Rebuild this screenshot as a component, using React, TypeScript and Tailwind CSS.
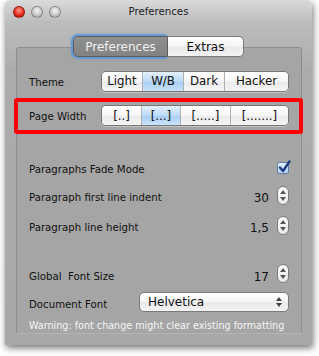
import React from 'react'

type Segment = { label: string; width: string; selected?: boolean }

const themeSegments: Segment[] = [
  { label: 'Light', width: 'w-[40px]' },
  { label: 'W/B', width: 'w-[41px]', selected: true },
  { label: 'Dark', width: 'w-[41px]' },
  { label: 'Hacker', width: 'w-[64px]' },
]

const widthSegments: Segment[] = [
  { label: '[..]', width: 'w-[39px]' },
  { label: '[...]', width: 'w-[39px]', selected: true },
  { label: '[.....]', width: 'w-[50px]' },
  { label: '[.......]', width: 'w-[58px]' },
]

const SegmentedControl = ({ segments }: { segments: Segment[] }) => (
  <div className="flex h-[21px] rounded-[5px] border border-[#767676] overflow-hidden shadow-[0_1px_0_rgba(255,255,255,0.35)]">
    {segments.map((s, i) => (
      <div
        key={s.label}
        className={`${s.width} flex items-center justify-center pt-[1px] text-[11.8px] text-[#111] ${i > 0 ? 'border-l border-[#b0b0b0]' : ''} ${
          s.selected
            ? 'bg-[linear-gradient(to_bottom,#e4f1fd,#bcdaf8_50%,#a6cdf4_51%,#c9e2fb)]'
            : 'bg-[linear-gradient(to_bottom,#ffffff,#f6f6f6_50%,#ebebeb_51%,#f4f4f4)]'
        }`}
      >
        {s.label}
      </div>
    ))}
  </div>
)

const Stepper = () => (
  <div className="w-[12px] h-[19px] rounded-full border border-[#7c7c7c] bg-[linear-gradient(to_bottom,#ffffff,#e9e9e9)] flex flex-col items-center justify-center gap-[3px]">
    <svg width="6" height="4" viewBox="0 0 6 4"><path d="M3 0L6 4H0z" fill="#555" /></svg>
    <svg width="6" height="4" viewBox="0 0 6 4"><path d="M0 0H6L3 4z" fill="#555" /></svg>
  </div>
)

const Checkbox = () => (
  <div className="w-[12px] h-[12px] rounded-[2px] border border-[#5f7fa8] bg-[linear-gradient(to_bottom,#e6f0fa,#b3d0ee)] relative">
    <svg className="absolute -top-[3px] left-[0px]" width="13" height="14" viewBox="0 0 13 14">
      <path d="M2 7.5L5 11L11.5 1.5" stroke="#1c3c84" strokeWidth="2.4" fill="none" strokeLinecap="round" strokeLinejoin="round" />
    </svg>
  </div>
)

const Row = ({ label, children, className = '', shift = 'pt-[5px]' }: { label: string; children: React.ReactNode; className?: string; shift?: string }) => (
  <div className={`flex items-center justify-between h-[20px] px-[12px] ${className}`}>
    <span className={`text-[10.2px] text-[#111] whitespace-pre ${shift}`}>{label}</span>
    <div className="flex items-center">{children}</div>
  </div>
)

const Light = ({ color }: { color: string }) => (
  <div className={`w-[12px] h-[12px] rounded-full border border-black/30 ${color}`} />
)

export default function App() {
  return (
    <div className="w-[319px] h-[356px] bg-white pl-[5px] font-['DejaVu_Sans',sans-serif] overflow-hidden">
      <div className="w-[307px] h-[345px] flex flex-col rounded-t-[5px] bg-[linear-gradient(to_bottom,#dadada_0px,#bdbdbd_22px,#acacac_70px,#a8a8a8_100%)] shadow-[1px_3px_7px_rgba(0,0,0,0.55)]">
        {/* title bar */}
        <div className="h-[22px] grid grid-cols-[1fr_auto_1fr] items-center">
          <div className="flex gap-[6px] pl-[8px] pt-[2px]">
            <Light color="bg-[radial-gradient(circle_at_50%_35%,#ff9a90,#e0271b_60%,#b3140c)]" />
            <Light color="bg-[radial-gradient(circle_at_50%_35%,#f4f4f4,#c4c4c4_60%,#a5a5a5)]" />
            <Light color="bg-[radial-gradient(circle_at_50%_35%,#f4f4f4,#c4c4c4_60%,#a5a5a5)]" />
          </div>
          <span className="text-[10.2px] text-[#222] pt-[1px]">Preferences</span>
          <div />
        </div>

        {/* tabs */}
        <div className="relative z-10 mt-[14px] h-[21px] flex justify-center">
          <div className="flex rounded-[5px] shadow-[0_0_0_2px_rgba(96,150,214,0.85),0_0_3px_2px_rgba(96,150,214,0.5)]">
            <div className="w-[95px] flex items-center justify-center rounded-l-[5px] border border-[#5d5d5d] bg-[linear-gradient(to_bottom,#8f8f8f,#838383)] text-[12px] text-[#f2f2f2]">
              Preferences
            </div>
          </div>
          <div className="w-[76px] flex items-center justify-center rounded-r-[5px] border border-l-0 border-[#7a7a7a] bg-[linear-gradient(to_bottom,#ffffff,#f3f3f3_50%,#e8e8e8_51%,#f3f3f3)] text-[12px] text-[#111]">
            Extras
          </div>
        </div>

        {/* panel */}
        <div className="-mt-[10px] ml-[11px] mr-[10px] h-[287px] rounded-[3px] border border-[#8d8d8d] border-b-[#b3b3b3] bg-[#a5a5a5] flex flex-col">
          <Row label="Theme" className="mt-[23px] h-[21px]" shift="pt-[2px]">
            <SegmentedControl segments={themeSegments} />
          </Row>

          <div className="mt-[6px] -ml-[3px] -mr-[2px] h-[37px] rounded-[3px] border-[4px] border-[#ff0000] flex items-center justify-between pl-[11px] pr-[10px]">
            <span className="text-[10.2px] text-[#111] pt-[2px]">Page Width</span>
            <SegmentedControl segments={widthSegments} />
          </div>

          <Row label="Paragraphs Fade Mode" className="mt-[25px]" shift="pt-[2px]">
            <Checkbox />
          </Row>
          <Row label="Paragraph first line indent" className="mt-[7px]">
            <span className="text-[12px] text-[#111] mr-[8px] pt-[5px]">30</span>
            <Stepper />
          </Row>
          <Row label="Paragraph line height" className="mt-[10px]" shift="pt-[6px]">
            <span className="text-[12px] text-[#111] mr-[8px] pt-[6px]">1,5</span>
            <Stepper />
          </Row>

          <Row label="Global  Font Size" className="mt-[28px]" shift="pt-[8px]">
            <span className="text-[12px] text-[#111] mr-[8px] pt-[7px]">17</span>
            <Stepper />
          </Row>
          <Row label="Document Font" className="mt-[9px]" shift="pt-[5px]">
            <div className="w-[150px] h-[20px] rounded-[5px] border border-[#7a7a7a] bg-[linear-gradient(to_bottom,#ffffff,#f4f4f4_50%,#e9e9e9_51%,#f3f3f3)] flex items-center justify-between pl-[8px] pr-[6px]">
              <span className="text-[12px] text-[#111]">Helvetica</span>
              <svg width="6" height="10" viewBox="0 0 6 10">
                <path d="M3 0L6 4H0z" fill="#444" />
                <path d="M0 6H6L3 10z" fill="#444" />
              </svg>
            </div>
          </Row>
          <div className="mt-[7px] h-[14px] px-[12px] pt-[1px] flex items-center text-[9.6px] text-[#f6f6f6] whitespace-nowrap">
            Warning: font change might clear existing formatting
          </div>
        </div>
      </div>
    </div>
  )
}
